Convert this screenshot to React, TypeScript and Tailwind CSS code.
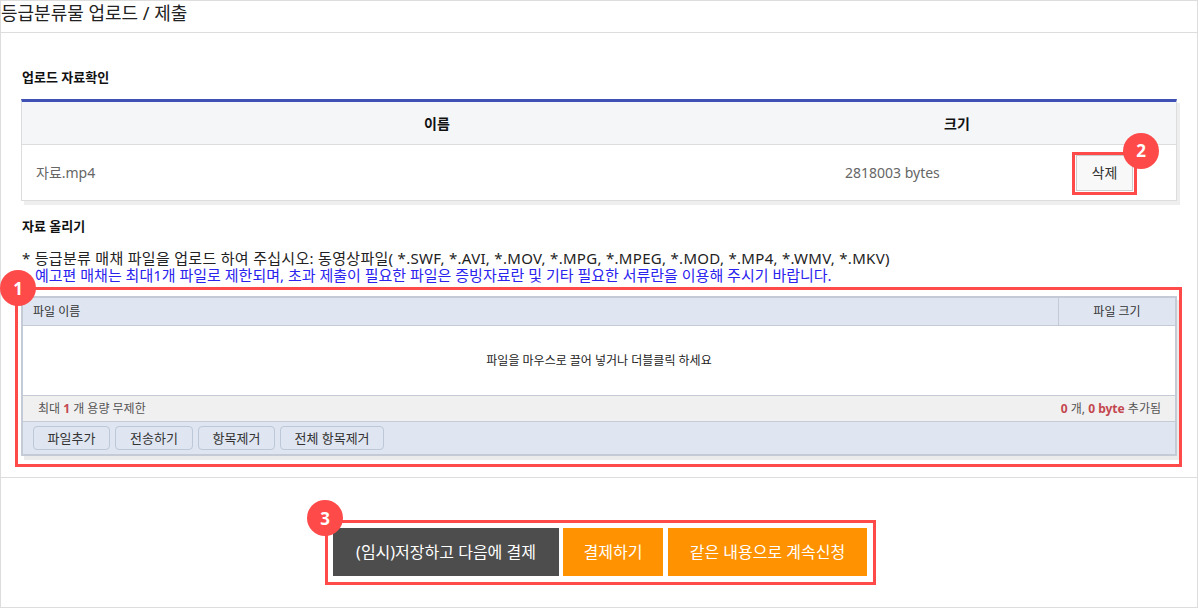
import React from 'react';

function Badge({ n, className }: { n: number; className: string }) {
  return (
    <span
      className={`absolute z-20 flex h-[36px] w-[36px] items-center justify-center rounded-full bg-[#ff4a4a] text-[17px] font-bold leading-none text-white ${className}`}
    >
      {n}
    </span>
  );
}

function ToolButton({ label, width }: { label: string; width: string }) {
  return (
    <button
      className={`h-[24px] ${width} rounded-[4px] border border-[#bcc7d7] bg-[#dfe6f1] text-[13px] leading-[22px] text-[#333]`}
    >
      {label}
    </button>
  );
}

export default function App() {
  return (
    <div className="h-[609px] w-[1198px] bg-white font-['Noto_Sans','Noto_Sans_CJK_KR',sans-serif]">
      <div className="flex h-[608px] flex-col border border-[#dddddd]">
        {/* title */}
        <div className="h-[32px] border-b border-[#dddddd]">
          <h1 className="text-[18px] leading-[25px] text-[#222]">등급분류물 업로드 / 제출</h1>
        </div>

        {/* main */}
        <div className="border-b border-[#dddddd] pl-[20px] pr-[20px] pt-[34px] pb-[21px]">
          <h2 className="pl-[1px] text-[13px] font-bold leading-[20px] text-[#111]">업로드 자료확인</h2>

          <div className="mt-[12px] border-x border-b border-t-[3px] border-x-[#dddddd] border-b-[#dddddd] border-t-[#3f51b5] shadow-[3px_4px_0_#eeeeee]">
            <div className="grid h-[43px] grid-cols-[830px_210px_1fr] items-center border-b border-[#dddddd] bg-[#f5f6f8] text-[14px] font-bold text-[#111]">
              <div className="text-center">이름</div>
              <div className="text-center">크기</div>
              <div />
            </div>
            <div className="flex h-[55px] items-center text-[14px] text-[#666]">
              <div className="w-[823px] pl-[14px]">자료.mp4</div>
              <div className="w-[231px]">2818003 bytes</div>
              <div className="relative">
                <button className="h-[36px] w-[57px] border border-[#cccccc] bg-[#f8f8f8] text-[14px] text-[#333]">
                  삭제
                </button>
                <span className="absolute -left-[4px] -right-[4px] -top-[3px] -bottom-[4px] z-10 border-[3px] border-[#ff4a4a]" />
                <Badge n={2} className="left-[47px] top-[-22px]" />
              </div>
            </div>
          </div>

          <h2 className="mt-[15px] pl-[1px] text-[13px] font-bold leading-[20px] text-[#111]">자료 올리기</h2>

          <div className="mt-[14px] pl-[1px] text-[15px] leading-[17px]">
            <p className="tracking-[0.3px] text-[#222]">
              * 등급분류 매채 파일을 업로드 하여 주십시오: 동영상파일( *.SWF, *.AVI, *.MOV, *.MPG, *.MPEG, *.MOD, *.MP4, *.WMV, *.MKV)
            </p>
            <p className="pl-[13px] text-[#2a23ee]">
              예고편 매채는 최대1개 파일로 제한되며, 초과 제출이 필요한 파일은 증빙자료란 및 기타 필요한 서류란을 이용해 주시기 바랍니다.
            </p>
          </div>

          <div className="relative mt-[12px]">
            <div className="border-2 border-[#c4cad6] text-[12px] shadow-[3px_4px_0_#ebebeb]">
              <div className="flex h-[28px] border-b border-[#c4cad6] bg-[#dfe6f1] leading-[27px] text-[#333]">
                <div className="flex-1 pl-[10px]">파일 이름</div>
                <div className="w-[117px] border-l border-[#c4cad6] text-center">파일 크기</div>
              </div>
              <div className="flex h-[69px] items-center justify-center bg-white text-[#222]">
                파일을 마우스로 끌어 넣거나 더블클릭 하세요
              </div>
              <div className="flex h-[26px] items-center justify-between border-t border-[#c4cad6] bg-[#f1f0f0] pl-[15px] pr-[14px] text-[#555]">
                <span>
                  최대 <b className="text-[#c4474f]">1</b> 개 용량 무제한
                </span>
                <span>
                  <b className="text-[#c4474f]">0</b> 개, <b className="text-[#c4474f]">0 byte</b> 추가됨
                </span>
              </div>
              <div className="flex h-[33px] items-center gap-[5px] border-t border-[#c4cad6] bg-[#dfe6f1] px-[10px]">
                <ToolButton label="파일추가" width="w-[77px]" />
                <ToolButton label="전송하기" width="w-[78px]" />
                <ToolButton label="항목제거" width="w-[77px]" />
                <ToolButton label="전체 항목제거" width="w-[104px]" />
              </div>
            </div>
            <span className="absolute -left-[6px] -right-[5px] -top-[9px] -bottom-[11px] z-10 border-[3px] border-[#ff4a4a]" />
            <Badge n={1} className="left-[-21px] top-[-26px]" />
          </div>
        </div>

        {/* bottom actions */}
        <div className="flex flex-1 justify-center pl-[3px] pt-[42px]">
          <div className="relative flex h-[65px] gap-[4px] border-[3px] border-[#ff4a4a] pl-[5px] pr-[6px] pt-[5px] text-[16px] [word-spacing:2px]">
            <button className="h-[48px] w-[226px] bg-[#4d4d4d] text-white">(임시)저장하고 다음에 결제</button>
            <button className="h-[48px] w-[100px] bg-[#ff9200] text-white">결제하기</button>
            <button className="ml-[1px] h-[48px] w-[199px] bg-[#ff9200] text-white">같은 내용으로 계속신청</button>
            <Badge n={3} className="left-[-21px] top-[-23px]" />
          </div>
        </div>
      </div>
    </div>
  );
}
